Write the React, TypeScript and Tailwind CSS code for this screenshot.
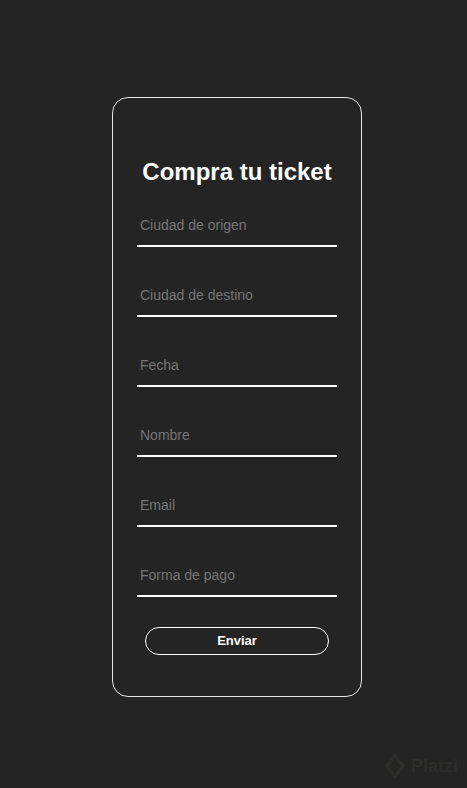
const fields = [
  'Ciudad de origen',
  'Ciudad de destino',
  'Fecha',
  'Nombre',
  'Email',
  'Forma de pago',
];

export default function App() {
  return (
    <div className="relative min-h-[788px] overflow-hidden bg-[#242424] pl-[112px] pt-[97px] font-['Liberation_Sans',Arial,sans-serif]">
      <form
        className="flex h-[600px] w-[250px] flex-col items-center rounded-[16px] border border-[#e6e6e6] px-[24px] pt-[60px]"
        onSubmit={(e) => e.preventDefault()}
      >
        <h1 className="text-[24px] font-bold leading-[28px] text-white">Compra tu ticket</h1>

        <div className="mt-[21px] flex w-[200px] flex-col gap-[30px]">
          {fields.map((f) => (
            <input
              key={f}
              placeholder={f}
              className="h-[40px] w-full border-b-2 border-white bg-transparent px-[3px] pb-[3px] text-[14px] text-white outline-none placeholder:text-[#767676]"
            />
          ))}
        </div>

        <button
          type="submit"
          className="mt-[30px] h-[28px] w-[184px] rounded-full border border-white text-[13px] font-bold text-white"
        >
          Enviar
        </button>
      </form>

      {/* faint watermark */}
      <div className="absolute left-[384px] top-[753px] flex items-center gap-[5px] text-[#2c2c2a]">
        <svg width="22" height="26" viewBox="0 0 24 28" fill="none" stroke="currentColor" strokeWidth="4">
          <path d="M12 3 L21 14 L12 25 L3 14 Z" />
        </svg>
        <span className="text-[18px] font-bold leading-none">Platzi</span>
      </div>
    </div>
  );
}
